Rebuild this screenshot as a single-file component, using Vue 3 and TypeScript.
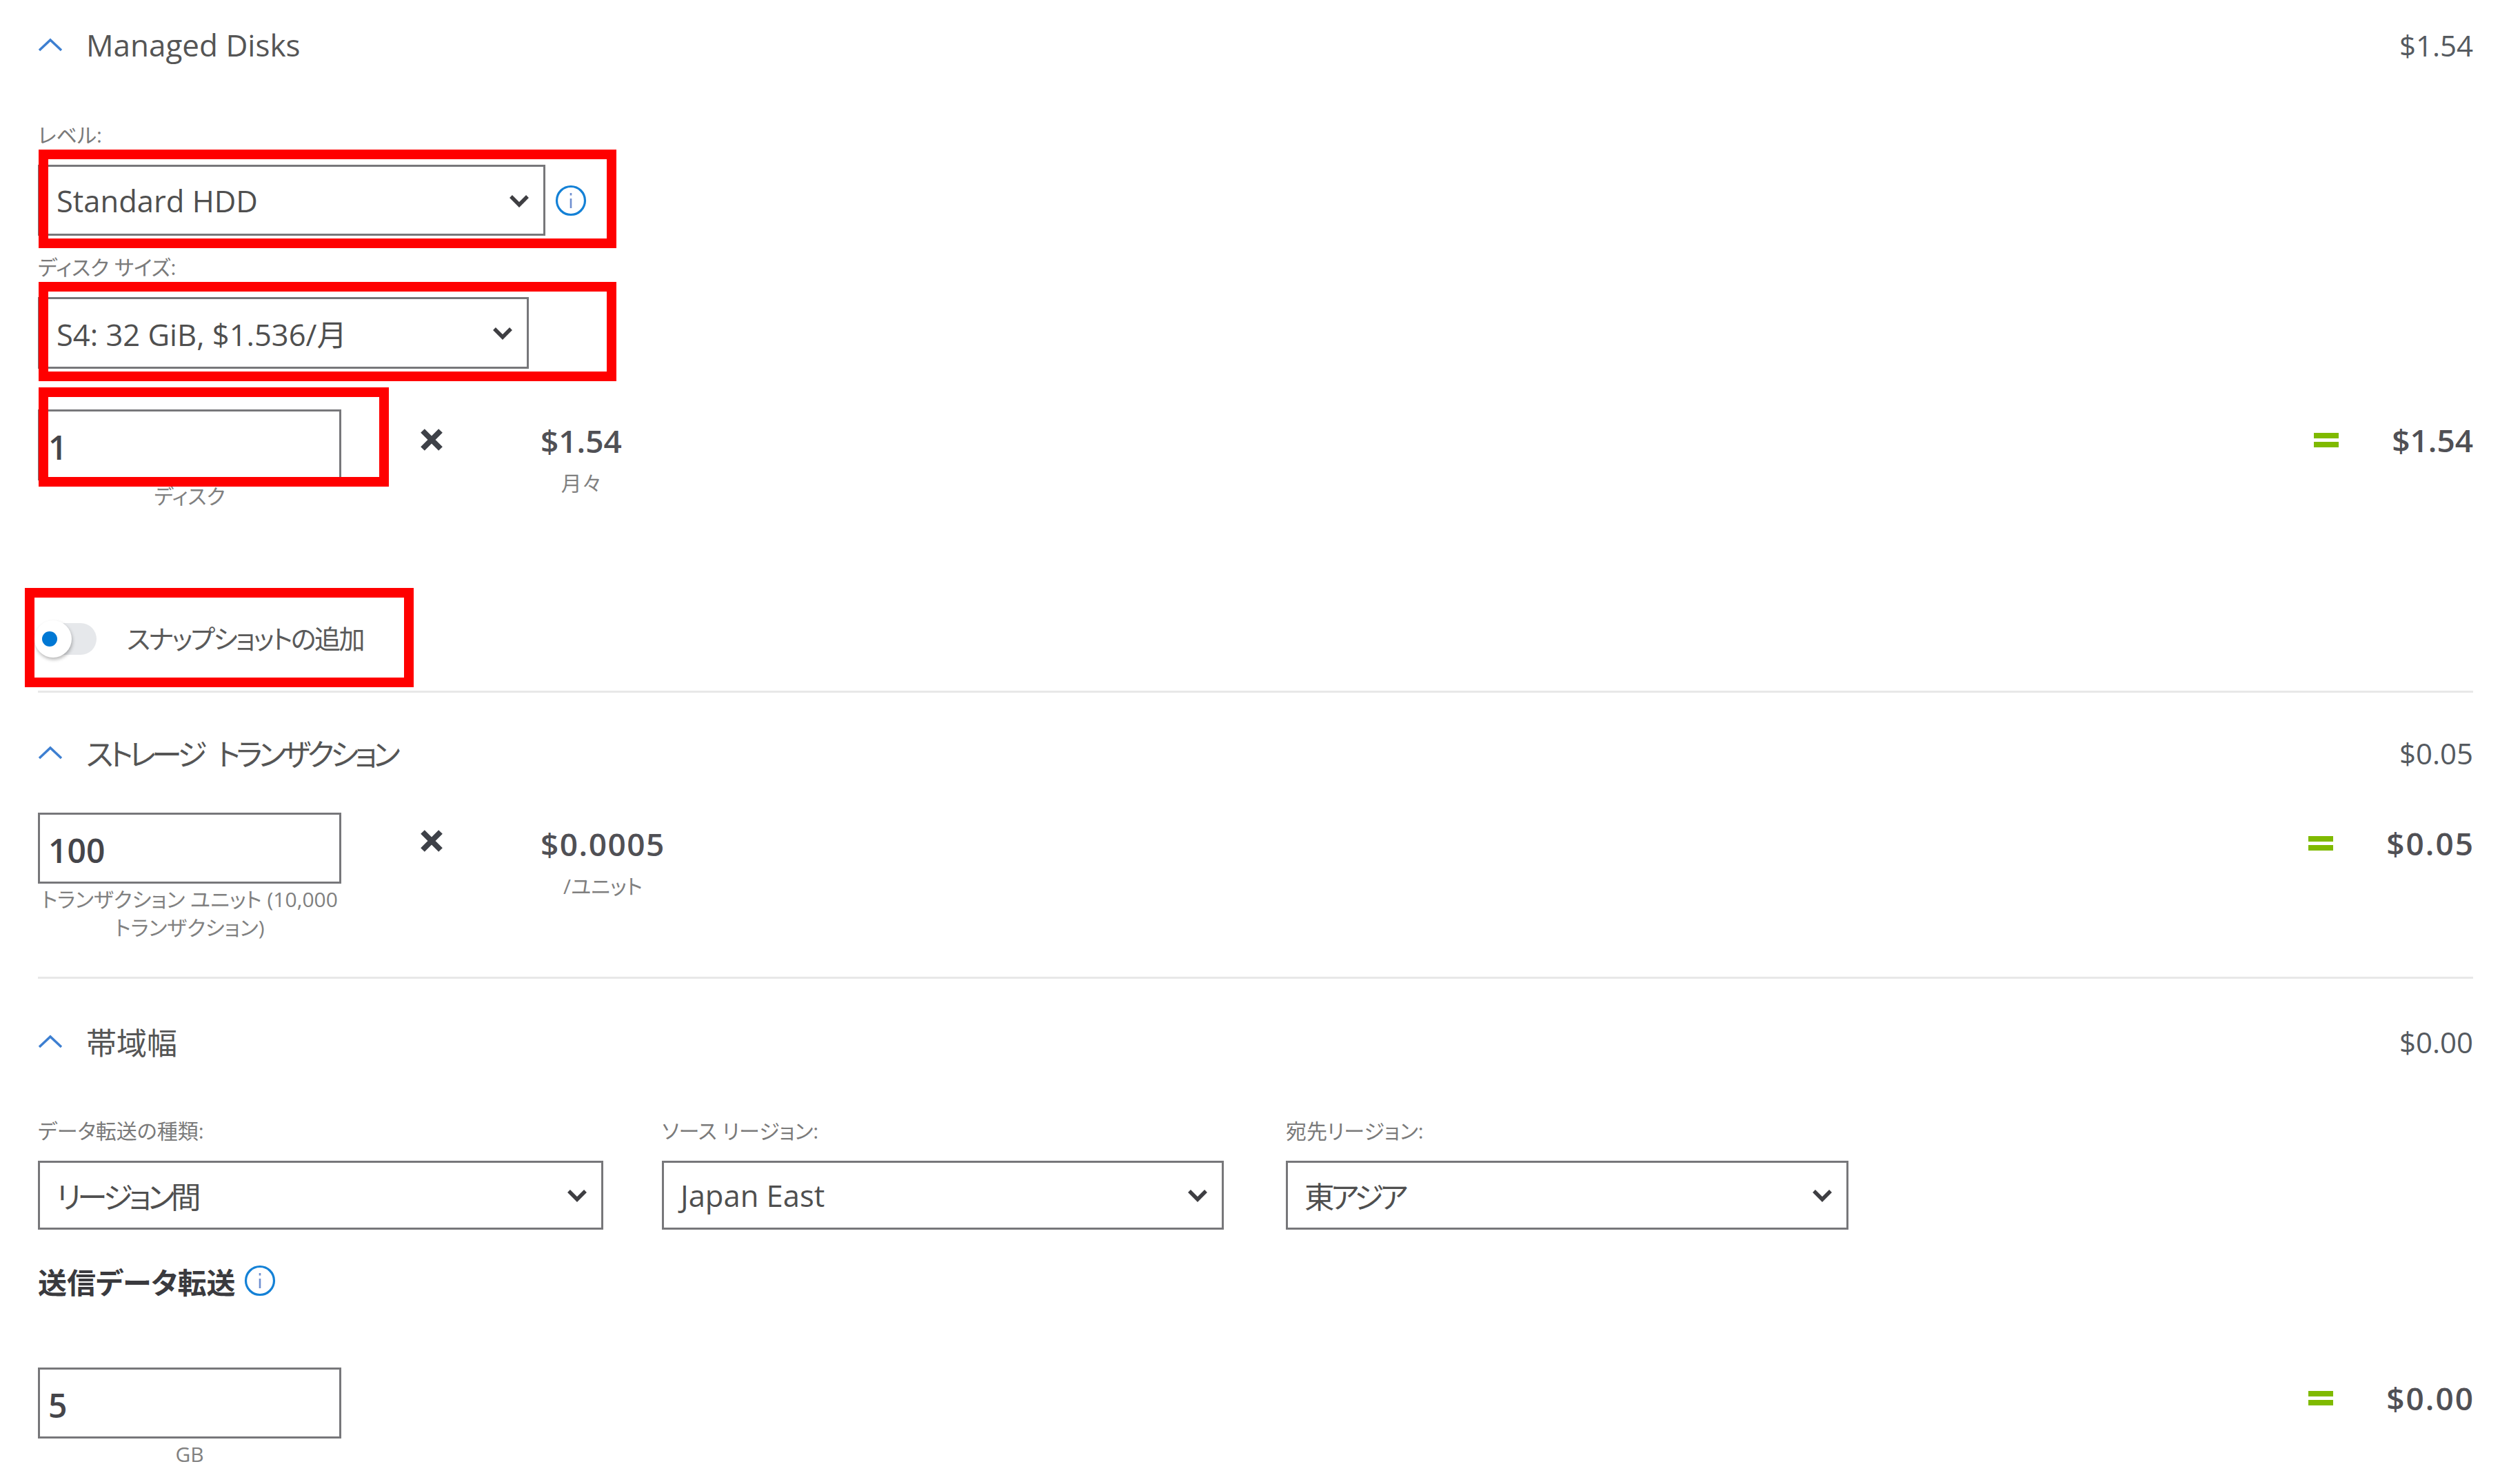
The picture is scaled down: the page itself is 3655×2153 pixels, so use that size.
<script setup lang="ts">
interface Field { label: string; value: string; cjk: boolean }
const transfer: Field[] = [
  { label: 'データ転送の種類:', value: 'リージョン間', cjk: true },
  { label: 'ソース リージョン:', value: 'Japan East', cjk: false },
  { label: '宛先リージョン:', value: '東アジア', cjk: true },
]
</script>

<template>
  <div class="page">
    <section class="sec">
      <header class="head first">
        <svg class="up" viewBox="0 0 36 20"><path d="M2 18 L18 3 L34 18" /></svg>
        <span class="title">Managed Disks</span>
        <span class="sum">$1.54</span>
      </header>

      <div class="label l-level">レベル:</div>
      <div class="inline">
        <div class="select s-tier">
          <span>Standard HDD</span>
          <svg class="down" viewBox="0 0 30 19"><path d="M3 3 L15 15 L27 3" /></svg>
        </div>
        <svg class="info" viewBox="0 0 46 46"><circle cx="23" cy="23" r="20.5" /><path d="M23 20 V34 M23 12 V15.5" /></svg>
      </div>

      <div class="label l-size">ディスク サイズ:</div>
      <div class="select s-size">
        <span>S4: 32 GiB, $1.536/月</span>
        <svg class="down" viewBox="0 0 30 19"><path d="M3 3 L15 15 L27 3" /></svg>
      </div>

      <div class="calc c-disk">
        <div class="qty">
          <div class="input"><span>1</span></div>
          <div class="sub">ディスク</div>
        </div>
        <svg class="times" viewBox="0 0 34 32"><path d="M4 3 L30 29 M30 3 L4 29" /></svg>
        <div class="price">
          <div class="amt">$1.54</div>
          <div class="unit">月々</div>
        </div>
        <div class="total">
          <span class="eq"><i></i><i></i></span>
          <span class="tv">$1.54</span>
        </div>
      </div>

      <div class="toggle-row">
        <div class="track"><div class="knob"><div class="dot"></div></div></div>
        <span class="toggle-text">スナップショットの追加</span>
      </div>
    </section>

    <section class="sec">
      <header class="head h-tx">
        <svg class="up" viewBox="0 0 36 20"><path d="M2 18 L18 3 L34 18" /></svg>
        <span class="title kana">ストレージ トランザクション</span>
        <span class="sum">$0.05</span>
      </header>

      <div class="calc c-tx">
        <div class="qty">
          <div class="input"><span>100</span></div>
          <div class="sub">トランザクション ユニット (10,000 トランザクション)</div>
        </div>
        <svg class="times t-tx" viewBox="0 0 34 32"><path d="M4 3 L30 29 M30 3 L4 29" /></svg>
        <div class="price">
          <div class="amt stretch">$0.0005</div>
          <div class="unit">/ユニット</div>
        </div>
        <div class="total">
          <span class="eq"><i></i><i></i></span>
          <span class="tv stretch-t">$0.05</span>
        </div>
      </div>
    </section>

    <section class="sec last">
      <header class="head">
        <svg class="up" viewBox="0 0 36 20"><path d="M2 18 L18 3 L34 18" /></svg>
        <span class="title">帯域幅</span>
        <span class="sum">$0.00</span>
      </header>

      <div class="fields">
        <div v-for="f in transfer" :key="f.label" class="field">
          <div class="label">{{ f.label }}</div>
          <div class="select s-wide">
            <span :class="{ 'v-cjk': f.cjk }">{{ f.value }}</span>
            <svg class="down" viewBox="0 0 30 19"><path d="M3 3 L15 15 L27 3" /></svg>
          </div>
        </div>
      </div>

      <div class="bold-row">
        <span class="bold">送信データ転送</span>
        <svg class="info" viewBox="0 0 46 46"><circle cx="23" cy="23" r="20.5" /><path d="M23 20 V34 M23 12 V15.5" /></svg>
      </div>

      <div class="calc c-gb">
        <div class="qty">
          <div class="input"><span>5</span></div>
          <div class="sub">GB</div>
        </div>
        <div class="total">
          <span class="eq"><i></i><i></i></span>
          <span class="tv stretch-t">$0.00</span>
        </div>
      </div>
    </section>

    <div class="frame f1"></div>
    <div class="frame f2"></div>
    <div class="frame f3"></div>
    <div class="frame f4"></div>
  </div>
</template>

<style>
html, body { margin: 0; background: #fff; }
</style>

<style scoped>
.page {
  position: relative;
  width: 3655px;
  height: 2153px;
  box-sizing: border-box;
  padding: 0 68px 0 55px;
  overflow: hidden;
  background: #fff;
  color: #505055;
  font-family: "Open Sans", "Noto Sans CJK JP", sans-serif;
  font-feature-settings: "palt";
}
.sec { border-bottom: 3px solid #e8e8e8; }
.sec.last { border-bottom: 0; }
.head {
  display: flex;
  align-items: center;
  height: 54px;
  margin-top: 64px;
}
.head.first { margin-top: 38px; }
.head.h-tx { margin-top: 60px; }
.up { width: 36px; height: 20px; margin-right: 34px; flex: none; }
.up path { fill: none; stroke: #3d7fd1; stroke-width: 3.5; }
.title { font-size: 44px; color: #555; }
.title.kana { letter-spacing: -5.6px; word-spacing: 14px; }
.sum { margin-left: auto; font-size: 42px; color: #555a60; }

.label {
  height: 40px;
  line-height: 40px;
  font-size: 30px;
  color: #7a7a7a;
  margin-bottom: 23px;
  white-space: nowrap;
}
.l-level { margin-top: 84px; }
.l-size { margin-top: 26px; }

.inline { display: flex; align-items: center; gap: 14px; }
.select {
  display: flex;
  align-items: center;
  justify-content: space-between;
  box-sizing: border-box;
  height: 103px;
  padding: 1px 20px 0 24px;
  border: 3px solid #77777a;
  font-size: 43.5px;
  color: #4f4f4f;
  white-space: nowrap;
}
.s-tier { width: 736px; }
.s-size { width: 712px; height: 104px; }
.s-wide { width: 100%; height: 100px; }
.v-cjk { letter-spacing: -5px; }
.down { width: 30px; height: 19px; flex: none; }
.down path { fill: none; stroke: #3e3e42; stroke-width: 5.5; }
.info { width: 46px; height: 46px; flex: none; }
.info circle { fill: none; stroke: #1481d6; stroke-width: 3.2; }
.info path { fill: none; stroke: #6f8fd0; stroke-width: 2.6; }

.calc { display: flex; align-items: flex-start; }
.c-disk { margin-top: 59px; }
.c-tx { margin-top: 60px; height: 238px; }
.c-gb { margin-top: 99px; }
.qty { width: 440px; flex: none; }
.input {
  display: flex;
  align-items: center;
  box-sizing: border-box;
  height: 103px;
  padding: 6px 0 0 12px;
  border: 3px solid #77777a;
  font-size: 48px;
  font-weight: 600;
  color: #45454a;
}
.sub {
  margin-top: 2px;
  text-align: center;
  font-size: 30px;
  line-height: 41px;
  color: #808080;
}
.times { width: 34px; height: 32px; margin: 28px 0 0 114px; flex: none; }
.times.t-tx { margin-top: 25px; }
.times path { fill: none; stroke: #3e4148; stroke-width: 8; }
.price {
  display: flex;
  flex-direction: column;
  align-items: center;
  margin: 18px 0 0 141px;
}
.times.t-tx + .price { margin-left: 141px; }
.amt { height: 54px; line-height: 54px; font-size: 46px; font-weight: 600; color: #505055; }
.amt.stretch { letter-spacing: 1.5px; }
.unit { margin-top: 15px; height: 40px; line-height: 40px; font-size: 30px; color: #808080; }
.total {
  display: flex;
  align-items: center;
  gap: 77px;
  height: 54px;
  margin: 17px 0 0 auto;
}
.eq { display: flex; flex-direction: column; gap: 5px; width: 36px; }
.eq i { display: block; height: 8px; background: #7fba00; }
.tv { font-size: 46px; font-weight: 600; color: #505055; }
.tv.stretch-t { letter-spacing: 2px; margin-right: -2px; }

.toggle-row {
  display: flex;
  align-items: center;
  height: 60px;
  margin: 157px 0 45px;
}
.track {
  position: relative;
  width: 85px;
  height: 46px;
  border-radius: 23px;
  background: #e6e8eb;
  margin-right: 44px;
  flex: none;
}
.knob {
  position: absolute;
  left: -5px;
  top: -4px;
  width: 54px;
  height: 54px;
  border-radius: 50%;
  background: #fff;
  box-shadow: 1px 3px 5px rgba(0, 0, 0, 0.28);
}
.dot {
  position: absolute;
  left: 11px;
  top: 16px;
  width: 22px;
  height: 22px;
  border-radius: 50%;
  background: #0078d4;
}
.toggle-text { margin-top: -5px; font-size: 38px; letter-spacing: -2.5px; color: #5a5a5a; white-space: nowrap; }

.fields {
  display: grid;
  grid-template-columns: 820px 815px 821px;
  column-gap: 85px;
  margin-top: 83px;
}
.field:nth-child(3) { margin-left: 5px; }
.bold-row { display: flex; align-items: center; gap: 12px; height: 54px; margin-top: 47px; }
.bold { font-size: 42px; font-weight: 700; color: #3a3a3e; }

.frame { position: absolute; box-sizing: border-box; border: 14px solid #ff0000; }
.f1 { left: 56px; top: 217px; width: 838px; height: 143px; }
.f2 { left: 56px; top: 409px; width: 838px; height: 144px; }
.f3 { left: 56px; top: 562px; width: 508px; height: 144px; }
.f4 { left: 36px; top: 853px; width: 564px; height: 144px; }
</style>
